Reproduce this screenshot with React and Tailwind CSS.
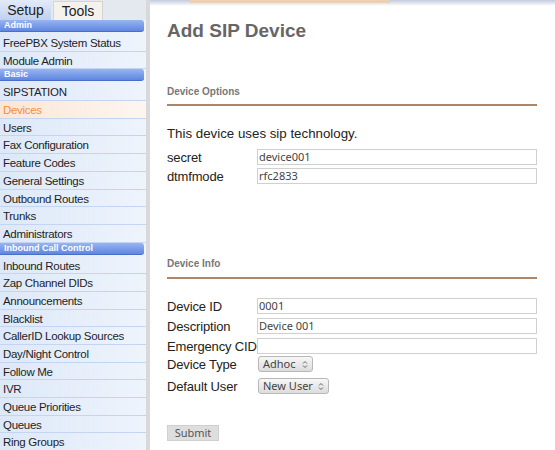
import React from 'react';

const navGroups = [
    { title: 'Admin', items: ['FreePBX System Status', 'Module Admin'] },
    { title: 'Basic', items: ['SIPSTATION', 'Devices', 'Users', 'Fax Configuration', 'Feature Codes', 'General Settings', 'Outbound Routes', 'Trunks', 'Administrators'] },
    { title: 'Inbound Call Control', items: ['Inbound Routes', 'Zap Channel DIDs', 'Announcements', 'Blacklist', 'CallerID Lookup Sources', 'Day/Night Control', 'Follow Me', 'IVR', 'Queue Priorities', 'Queues', 'Ring Groups'] },
];

const Updown = () => (
    <svg width="6" height="9" viewBox="0 0 6 9" className="ml-auto">
        <path d="M1 3.5 L3 1.5 L5 3.5" fill="none" stroke="#666" strokeWidth="1" />
        <path d="M1 5.5 L3 7.5 L5 5.5" fill="none" stroke="#666" strokeWidth="1" />
    </svg>
);

const Field = ({ label, value }) => (
    <div className="flex items-center h-[16px]">
        <div className="w-[90px] whitespace-nowrap text-[13px] tracking-[-0.15px] text-[#222] leading-none">{label}</div>
        <div className="w-[280px] h-[16px] border border-[#d0d0d0] bg-white px-[1px] flex items-center text-[11px] text-[#444] font-['Noto_Sans',sans-serif]">
            {value}
        </div>
    </div>
);

const SelectRow = ({ label, value, width }) => (
    <div className="flex items-center h-[16px]">
        <div className="w-[91px] whitespace-nowrap text-[13px] tracking-[-0.15px] text-[#222] leading-none">{label}</div>
        <div className={`${width} h-[16px] rounded-[3px] border border-[#b8b8b8] bg-gradient-to-b from-[#f7f7f7] to-[#dcdcdc] px-[4px] flex items-center text-[11px] text-[#444] font-['Noto_Sans',sans-serif]`}>
            {value}
            <Updown />
        </div>
    </div>
);

export default function App() {
    return (
        <div className="w-[555px] h-[450px] overflow-hidden flex bg-white font-['Liberation_Sans',Arial,sans-serif]">
            {/* Sidebar */}
            <div className="w-[150px] shrink-0 flex flex-col border-r-[4px] border-[#d9d9d9]">
                <div className="flex h-[20px] bg-[#e4e8ef] items-end">
                    <div className="w-[51px] h-[20px] rounded-tl-[3px] bg-gradient-to-b from-[#e3ebf8] to-[#bfd1ef] text-[14px] text-[#222] flex items-center justify-center">Setup</div>
                    <div className="w-[50px] h-[19px] ml-[2px] bg-[#f5f2ed] border border-[#d8d3cb] border-b-0 text-[14px] text-[#222] flex items-center justify-center">Tools</div>
                </div>
                <div className="flex-1 bg-gradient-to-r from-[#dde8f8] to-[#eef4fc]">
                    {navGroups.map(group => (
                        <div key={group.title}>
                            <div className="h-[14px] pr-[2px]">
                                <div className="h-[12px] rounded-r-[3px] bg-gradient-to-b from-[#98b5ef] to-[#5f86e2] border-b border-[#4a6fc8] text-white text-[9px] font-bold leading-[11px] pl-[4px]">
                                    {group.title}
                                </div>
                            </div>
                            {group.items.map(item => (
                                <div
                                    key={item}
                                    className={`h-[17.7px] border-b border-[#c3d5f0] pl-[3px] pt-[2px] text-[11.5px] tracking-[-0.3px] leading-[15px] whitespace-nowrap ${
                                        item === 'Devices'
                                            ? 'bg-gradient-to-r from-[#fbe6d6] to-[#fdf6f0] text-[#f0913f]'
                                            : 'text-[#1e1e1e]'
                                    }`}
                                >
                                    {item}
                                </div>
                            ))}
                        </div>
                    ))}
                </div>
            </div>

            {/* Content */}
            <div className="flex-1 flex flex-col">
                <div className="h-[6px] bg-gradient-to-b from-[#c3cadd] to-white flex">
                    <div className="ml-[40px] w-[200px] h-[3px] bg-[#ecd0b2]" />
                </div>
                <div className="pl-[17px] pr-[18px] flex flex-col">
                    <div className="mt-[13px] text-[19px] font-bold text-[#666] leading-[24px]">Add SIP Device</div>

                    <div className="mt-[43px] pb-[6px] border-b-2 border-[#b08565] text-[10px] font-bold text-[#777] leading-[12px]">Device Options</div>

                    <div className="mt-[20px] text-[13.3px] text-[#222] leading-[16px]">This device uses sip technology.</div>
                    <div className="mt-[7px] flex flex-col gap-[3px]">
                        <Field label="secret" value="device001" />
                        <Field label="dtmfmode" value="rfc2833" />
                    </div>

                    <div className="mt-[74px] pb-[7px] border-b-2 border-[#b08565] text-[10px] font-bold text-[#777] leading-[12px]">Device Info</div>

                    <div className="mt-[19px] flex flex-col gap-[4px]">
                        <Field label="Device ID" value="0001" />
                        <Field label="Description" value="Device 001" />
                        <Field label="Emergency CID" value="" />
                    </div>
                    <div className="mt-[2px] flex flex-col gap-[6px]">
                        <SelectRow label="Device Type" value="Adhoc" width="w-[55px]" />
                        <SelectRow label="Default User" value="New User" width="w-[71px]" />
                    </div>

                    <div className="mt-[31px]">
                        <div className="w-[52px] h-[16px] bg-[#dedede] border border-[#d0d0d0] text-[11px] text-[#555] flex items-center justify-center font-['Noto_Sans',sans-serif]">
                            Submit
                        </div>
                    </div>
                </div>
            </div>
        </div>
    );
}
